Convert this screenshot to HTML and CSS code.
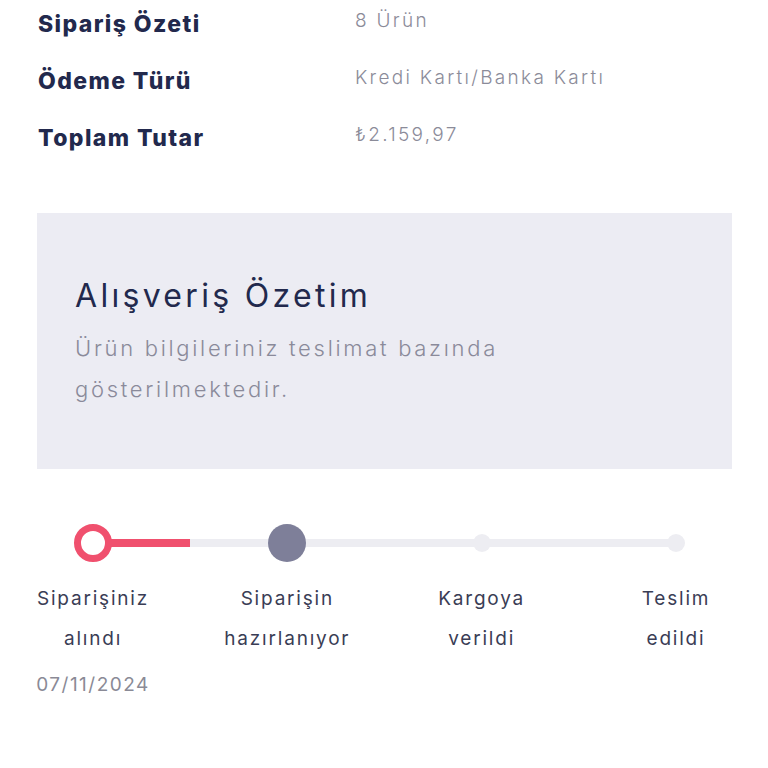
FILE: index.html
```html
<!DOCTYPE html>
<html lang="tr">
<head>
<meta charset="utf-8">
<link rel="stylesheet" href="styles.css">
</head>
<body>
<div class="page">
  <div class="summary">
    <div class="row"><div class="label">Sipariş Özeti</div><div class="value">8 Ürün</div></div>
    <div class="row"><div class="label">Ödeme Türü</div><div class="value">Kredi Kartı/Banka Kartı</div></div>
    <div class="row"><div class="label">Toplam Tutar</div><div class="value">₺2.159,97</div></div>
  </div>
  <div class="box">
    <div class="box-title">Alışveriş Özetim</div>
    <div class="box-text">Ürün bilgileriniz teslimat bazında gösterilmektedir.</div>
  </div>
  <div class="stepper">
    <div class="track">
      <div class="track-line"></div>
      <div class="track-progress"></div>
      <div class="nodes">
        <div class="node"><span class="dot dot-active"></span></div>
        <div class="node"><span class="dot dot-current"></span></div>
        <div class="node"><span class="dot dot-todo"></span></div>
        <div class="node"><span class="dot dot-todo"></span></div>
      </div>
    </div>
    <div class="labels">
      <div class="step"><div class="step-text">Siparişiniz<br>alındı</div><div class="step-date">07/11/2024</div></div>
      <div class="step"><div class="step-text">Siparişin<br>hazırlanıyor</div></div>
      <div class="step"><div class="step-text">Kargoya<br>verildi</div></div>
      <div class="step"><div class="step-text">Teslim<br>edildi</div></div>
    </div>
  </div>
</div>
</body>
</html>
```
FILE: styles.css
```css
* { box-sizing: border-box; }
body { margin: 0; background: #fff; }
.page { padding: 0 36px 0 37px; }
.summary { padding-top: 6px; }
.row { display: flex; height: 57px; align-items: flex-start; }
.label {
  width: 318px; padding-left: 1px;
  font-family: Inter, sans-serif; font-weight: 800; font-size: 23px;
  color: #22294d; line-height: 36px; letter-spacing: 1.4px;
}
.value {
  font-family: Inter, sans-serif; font-weight: 300; font-size: 19px;
  color: #8b8b99; line-height: 30px; letter-spacing: 2.3px;
}
.box {
  margin-top: 36px;
  background: #ececf3;
  height: 256px;
  padding: 61px 38px 0 38px;
}
.box-title {
  font-family: Inter, sans-serif; font-size: 32px; color: #22294d;
  line-height: 44px; letter-spacing: 3.3px;
}
.box-text {
  margin-top: 10px;
  width: 540px;
  font-family: Inter, sans-serif; font-weight: 300; font-size: 22px; color: #8a8a9a;
  line-height: 41px; letter-spacing: 2.7px;
}
.stepper { margin-top: 55px; }
.track { position: relative; height: 38px; margin: 0 37px; }
.track-line {
  position: absolute; left: 19px; right: 19px; top: 15px; height: 8px;
  background: #ededf2;
}
.track-progress {
  position: absolute; left: 19px; width: 97px; top: 15px; height: 8px;
  background: #f0506e;
}
.nodes {
  position: relative; display: flex; justify-content: space-between; height: 38px;
}
.node { width: 38px; height: 38px; display: flex; align-items: center; justify-content: center; }
.dot { display: block; border-radius: 50%; }
.dot-active { width: 38px; height: 38px; background: #fff; border: 7px solid #f0506e; }
.dot-current { width: 38px; height: 38px; background: #7e7f99; }
.dot-todo { width: 18px; height: 18px; background: #ededf2; }
.labels {
  display: grid; grid-template-columns: repeat(4, 38px); justify-content: space-between;
  margin: 17px 37px 0;
}
.step { width: 38px; display: flex; flex-direction: column; align-items: center; }
.step-text, .step-date {
  width: 194px; flex: none; text-align: center;
  font-family: Inter, sans-serif; font-size: 19px; line-height: 40px; letter-spacing: 1.8px;
}
.step-text { color: #3a3d55; }
.step-date { color: #8a8a96; margin-top: 6px; letter-spacing: 1.5px; }
```
